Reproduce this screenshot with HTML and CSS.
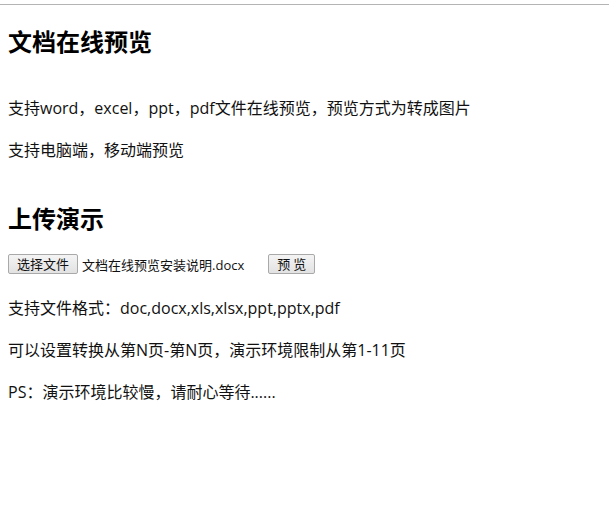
FILE: index.html
```html
<!DOCTYPE html>
<html lang="zh-CN">
<head>
    <meta charset="UTF-8">
    <title>文档在线预览</title>
    <link rel="stylesheet" href="styles.css">
</head>
<body>
    <div class="page">
        <h2>文档在线预览</h2>
        <p>支持word，excel，ppt，pdf文件在线预览，预览方式为转成图片</p>
        <p>支持电脑端，移动端预览</p>

        <h2 class="upload-title">上传演示</h2>
        <form class="upload" onsubmit="return false;">
            <button type="button" class="btn">选择文件</button>
            <span class="file-name">文档在线预览安装说明.docx</span>
            <button type="submit" class="btn">预 览</button>
        </form>
        <p>支持文件格式：doc,docx,xls,xlsx,ppt,pptx,pdf</p>
        <p>可以设置转换从第N页-第N页，演示环境限制从第1-11页</p>
        <p>PS：演示环境比较慢，请耐心等待......</p>
    </div>
</body>
</html>
```

FILE: styles.css
```css
body {
    margin: 4px 0 0;
    border-top: 1px solid #b4b4b4;
    font-family: "Open Sans", "Noto Sans CJK SC", sans-serif;
    font-size: 16px;
    color: #111;
    background: #fff;
}
.page {
    padding: 1px 8px;
}
h2 {
    font-size: 24px;
    line-height: 32px;
    margin: 20px 0 38px;
    color: #000;
}
.upload-title {
    margin-top: 41px;
    margin-bottom: 19px;
}
p {
    line-height: 24px;
    margin: 0 0 18px;
}
.upload {
    display: flex;
    align-items: center;
    margin-bottom: 22px;
}
.btn {
    font-family: "Noto Sans CJK SC", sans-serif;
    font-size: 13px;
    height: 20px;
    padding: 0 8px;
    line-height: 18px;
    border: 1px solid #a9a9a9;
    border-radius: 2px;
    background: linear-gradient(#f4f4f4, #e2e2e2);
    color: #111;
}
.file-name {
    font-size: 13px;
    margin: 0 24px 0 4px;
}
```
